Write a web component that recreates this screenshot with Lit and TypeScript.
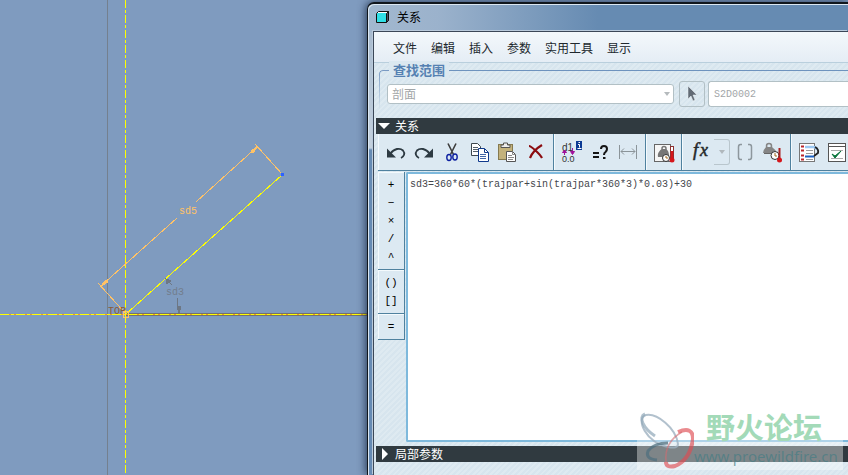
import { LitElement, html, css, svg } from "lit";
import { customElement, state } from "lit/decorators.js";

const icon = (body: unknown, w = 24, h = 24) =>
  html`<svg width=${w} height=${h} viewBox="0 0 ${w} ${h}" aria-hidden="true">${body}</svg>`;

const ICONS: Record<string, unknown> = {
  undo: icon(svg`<path d="M3 8.500v9h9z" fill="#2d3a42"/><path d="M6.500 13.500C10 8.500 16 7.500 19 10.500c2.500 3 1 6-2 7.500" fill="none" stroke="#2d3a42" stroke-width="1.800"/>`),
  redo: icon(svg`<path d="M21 8.500v9h-9z" fill="#2d3a42"/><path d="M17.500 13.500C14 8.500 8 7.500 5 10.500c-2.500 3-1 6 2 7.500" fill="none" stroke="#2d3a42" stroke-width="1.800"/>`),
  cut: icon(svg`<path d="M8 3.500l5.500 11M16 3.500l-5.500 11" stroke="#3c3c3c" stroke-width="1.600" fill="none"/>
    <ellipse cx="9" cy="17.500" rx="2.200" ry="3" fill="none" stroke="#0c1fa0" stroke-width="1.400"/>
    <ellipse cx="15" cy="17" rx="2.200" ry="3" fill="none" stroke="#0c1fa0" stroke-width="1.400"/>`),
  copy: icon(svg`<path d="M3.500 3.500h6l3 3v9h-9z" fill="#fff" stroke="#3d474d"/><path d="M5 7.500h5M5 9.500h5M5 11.500h5" stroke="#56616a"/>
    <path d="M10.500 8.500h6l4 4v9h-10z" fill="#fff" stroke="#103a8c"/><path d="M16.500 8.500v4h4" fill="none" stroke="#103a8c"/><path d="M12 14.500h6M12 16.500h6M12 18.500h6" stroke="#4267a8"/>`),
  paste: icon(svg`<rect x="2.500" y="4.500" width="14" height="15" fill="#c3b27c" stroke="#857a50"/><path d="M5 7.500h9V5h-2.500V3h-4v2H5z" fill="#eee" stroke="#555"/>
    <path d="M10.500 11.500h6l3 3v7h-9z" fill="#fff" stroke="#555"/><path d="M16.500 11.500v3h3M12 15.500h4M12 17.500h6M12 19.500h5" fill="none" stroke="#888"/>`),
  remove: icon(svg`<path d="M5 6c2 0 11 8 13 12M18 5C13 8 8 13 6 18" stroke="#8b0c10" stroke-width="2.200" fill="none"/>`),
  dims: icon(svg`<text x="2" y="11" font-size="10" font-family="Liberation Sans, sans-serif" fill="#333">d1</text><text x="2" y="22" font-size="9" font-family="Liberation Sans, sans-serif" fill="#333">0.0</text>
    <path d="M4.500 15V11M2.500 12.500h4L4.500 10zM12.500 8v5M10.500 11.500h4l-2 3z" stroke="#a0109a" fill="#a0109a"/>
    <rect x="16" y="1" width="6" height="9" fill="#0a3a94"/><path d="M18 4.500h1.500v3M17.500 8.500h4M18.500 2.500h1.500" stroke="#fff" fill="none"/>`),
  query: icon(svg`<path d="M5 13h6M5 17h6" stroke="#151515" stroke-width="2"/><path d="M13 9q0-3 3-3 3 0 3 3 0 1.500-1.500 3-1.500 1-1.500 3M15 18h2.500" fill="none" stroke="#151515" stroke-width="2"/>`),
  measure: icon(svg`<path d="M3.500 5v14M20.500 5v14M5 11.500h14M8 8.500l-3 3 3 3M16 8.500l3 3-3 3" fill="none" stroke="#8b9499"/>`),
  unitBox: icon(svg`<rect x="2.500" y="4.500" width="16" height="17" fill="#f6f6f6" stroke="#666"/><path d="M6 17c-1-4 2-7 4-8l4 0c3 2 3 5 3 8z" fill="#777"/><circle cx="12" cy="8.500" r="2" fill="none" stroke="#777" stroke-width="1.500"/>
    <circle cx="14" cy="18" r="3.500" fill="#fff" stroke="#333"/><path d="M14 16v2h2" stroke="#a36a20" fill="none"/><rect x="18.500" y="6.500" width="3" height="12" fill="#fff" stroke="#8d3030"/><path d="M20 11v9" stroke="#d5161b" stroke-width="2.500"/><circle cx="20" cy="20" r="2.500" fill="#d5161b"/>`),
  fx: icon(svg`<g font-style="italic" font-family="Liberation Serif, serif" fill="#26292b" stroke="#26292b" stroke-width=".5"><text x="5" y="16" font-size="19">f</text><text x="12" y="16" font-size="18">x</text></g>`),
  paren: icon(svg`<path d="M9 4.500H7.500Q5.500 4.500 5.500 7v10q0 2.500 2 2.500H9M15 4.500h1.500Q18.500 4.500 18.500 7v10q0 2.500-2 2.500H15" fill="none" stroke="#8d979d" stroke-width="1.500"/>`),
  unit: icon(svg`<path d="M2 13q0-3 3-6h6q4 3 5 6z" fill="#858585"/><circle cx="8" cy="6" r="2.500" fill="none" stroke="#858585" stroke-width="1.500"/><path d="M3 13.500h11" stroke="#666"/>
    <circle cx="14" cy="15.500" r="4" fill="#fff" stroke="#333"/><path d="M14 13v3h2" stroke="#a36a20" fill="none"/><path d="M18.500 8v11" stroke="#a22" stroke-width="2"/><circle cx="18.500" cy="20" r="2.500" fill="#d5161b"/>`),
  sort: icon(svg`<rect x="2.500" y="3.500" width="15" height="18" fill="#fff" stroke="#777"/><path d="M4 6.500h3M4 10.500h3M4 15.500h3M4 19.500h3" stroke="#b8242b" stroke-width="2"/><path d="M9 10.500h7M9 13.500h7M9 19.500h7" stroke="#999"/>
    <path d="M8 7h8q4 0 4 3" stroke="#9bc8f3" stroke-width="2.500" fill="none"/><path d="M18 7q4 2 3 6l-4 3" stroke="#222" stroke-width="1.800" fill="none"/><path d="M8 16.500h9" stroke="#1b62c4" stroke-width="2"/>`),
  verify: icon(svg`<rect x="3.500" y="3.500" width="17" height="18" fill="#fff" stroke="#555"/><path d="M4 6.500h16" stroke="#555"/><path d="M6 10.500h12M6 18.500h12" stroke="#aaa"/><path d="M7 14l3 4 6-7-6 5z" fill="#08743a" stroke="#08743a"/>`),
};

const GROUPS: [string, string][][] = [
  [["undo", "撤消"], ["redo", "重做"], ["cut", "剪切"], ["copy", "复制"], ["paste", "粘贴"], ["remove", "删除"]],
  [["dims", "切换尺寸"], ["query", "提供值"], ["measure", "显示尺寸"]],
  [["unitBox", "设置单位"]],
  [["fx", "插入函数"], ["more", "更多函数"], ["paren", "插入参数"], ["unit", "单位"]],
  [["sort", "排序关系"], ["verify", "校验关系"]],
];

const OPERATORS = [["+", "−", "×", "/", "^"], ["()", "[]"], ["="]];
const MENUS = ["文件", "编辑", "插入", "参数", "实用工具", "显示"];

/* Sketcher view with the dimensioned line */
@customElement("sketch-canvas")
export class SketchCanvas extends LitElement {
  static styles = css`
    :host { display: block; overflow: hidden; background: #7f9bbf; }
    svg { display: block; width: 100%; height: 100%; shape-rendering: crispEdges; }
    .label { font: 10px "Liberation Mono", monospace; }
    .orange { stroke: #ffc266; fill: none; }
    .yellow { stroke: #ffff00; fill: none; }
    .gray { stroke: #74808f; fill: none; }
  `;
  render() {
    return html`<svg role="img" aria-label="草绘">
      <line x1="107.5" x2="107.5" y1="0" y2="100%" class="gray" />
      <line x1="126" x2="100%" y1="314.500" y2="314.500" stroke="#74716e" stroke-width="3" />
      <line x1="0" x2="100%" y1="314.500" y2="314.500" stroke="#ef9b20" />
      <line x1="0" x2="100%" y1="314.500" y2="314.500" class="yellow" stroke-dasharray="9 2 3 2" />
      <line x1="125.500" x2="125.500" y1="0" y2="100%" class="yellow" stroke-dasharray="8 2 3 2" />
      <path d="M126 314L282 175" class="yellow" />
      <path d="M102 285L177 218M196 202L258 146M98 283L126 314M255 144L282 174" class="orange" />
      <path d="M101 286l5-6 2 2zM258 146l-7 5 2 2z" fill="#ffc266" stroke="#ffc266" />
      <path d="M123 311h5v6h-5z" class="orange" />
      <path d="M166 279l6 6M166 279l1 5 4-3zM177 298l2 15M177 306h4l-2 7z" stroke="#6d7784" fill="#6d7784" />
      <rect x="281" y="173" width="3" height="3" fill="#2e62ff" />
      <text x="179" y="214" class="label" fill="#ffc266">sd5</text>
      <text x="166" y="295" class="label" fill="#727d8c">sd3</text>
      <text x="108" y="314" class="label" fill="#8c5a35">TOP</text>
    </svg>`;
  }
}

/* Forum mark laid over the lower right corner */
@customElement("forum-mark")
export class ForumMark extends LitElement {
  static styles = css`
    :host { display: flex; pointer-events: none; width: 206px; height: 64px; box-sizing: border-box;
      background: rgba(255, 255, 255, 0.38); }
    .logo { flex: none; width: 57px; height: 64px; }
    .words { display: flex; flex-direction: column; }
    .name { font: bold 29px/34px "Liberation Sans", "Noto Sans CJK SC", sans-serif; color: #a3dab8; padding: 6px 0 0 12px; white-space: nowrap; }
    .site { font: 15px/20px "Noto Sans", sans-serif; color: rgba(70, 125, 132, 0.7); white-space: nowrap; }
  `;
  render() {
    return html`<svg class="logo" viewBox="0 0 57 64" aria-hidden="true">
        <g fill="none">
          <path d="M41 38C39 22 20 7 9 9-2 12 9 37 31 41Q41 43 41 38" stroke="#9fb2c1" stroke-opacity=".8" stroke-width="2" />
          <path d="M18 30C6 22 1 11 8 8" stroke="#8fa6b8" stroke-opacity=".7" stroke-width="3" />
          <path d="M31 37Q17 37 11 45 8 53 20 54" stroke="#50707f" stroke-opacity=".75" stroke-width="3" />
          <path d="M41 26Q56 20 56 33 53 54 38 60 29 62 29 56" stroke="#df4b52" stroke-opacity=".65" stroke-width="4" />
          <path d="M29 56Q27 36 45 26" stroke="#d46a70" stroke-opacity=".6" stroke-width="1.500" />
        </g>
      </svg>
      <div class="words"><span class="name">野火论坛</span><span class="site">www.proewildfire.cn</span></div>`;
  }
}

@customElement("relations-window")
export class RelationsWindow extends LitElement {
  @state() private relation = "sd3=360*60*(trajpar+sin(trajpar*360*3)*0.03)+30";

  static styles = css`
    * { box-sizing: border-box; }
    :host { display: flex; box-sizing: border-box; flex-direction: column; min-width: 0; overflow: hidden;
      border: 1px solid #10161c; border-width: 2px 0 0 1px; border-top-left-radius: 7px; padding-left: 5px;
      font: 12px "Noto Sans CJK SC", sans-serif; color: #20282d;
      background:
        linear-gradient(90deg, #a2b8cf 0, #9bb2cc 70px, #668bb2 230px) top / 100% 28px no-repeat,
        linear-gradient(#a2b6cb, #c4d1de 144px, #668bb4 146px);
      box-shadow: inset 1px 1px #dbe7f2, -1px 0 8px rgba(15, 30, 55, 0.8); }
    button { border: 0; background: none; padding: 0; color: inherit; font: inherit; display: grid; place-items: center; }
    .title { display: flex; align-items: center; gap: 7px; height: 27px; flex: none; padding: 0 0 2px 2px; font-size: 12px; font-weight: 400; margin: 0; color: #000; }
    .body { flex: 1; display: flex; flex-direction: column; min-height: 0; border: 1px solid #3b4757; border-width: 1px 0 0 1px;
      box-shadow: -1px -1px #b9cadb; padding-left: 2px;
      background: repeating-linear-gradient(135deg, #d7e5ee 0 2px, #deeaf1 2px 4px); }
    .menu { display: flex; flex: none; gap: 14px; align-items: center; height: 31px; margin-left: -2px; padding-left: 19px;
      background: linear-gradient(#f3f8fb, #e5edf5); border-bottom: 1px solid #b9cfdd; }
    .scope { display: flex; flex: none; height: 55px; margin: 0 0 0 3px; padding: 0 0 8px 8px; min-width: 0; position: relative; }
    .scope::before { content: ""; position: absolute; inset: 7px 0 8px 0; border: solid #7899c2; border-width: 1px 0 0 1px; border-top-left-radius: 4px;
      mask: linear-gradient(#000, transparent); }
    .line { position: absolute; inset: 7px 0 auto 70px; border-top: 1px solid #6e93be; }
    .legend { position: absolute; top: -2px; left: 10px; padding: 0 4px; line-height: 18px; font-size: 13px; font-weight: bold; color: #5581b2; background: #dbe8f0; }
    .row { display: flex; gap: 3px; flex: 1; align-items: center; padding-top: 15px; min-width: 0; }
    .pick { position: relative; flex: none; width: 289px; padding-right: 2px; }
    .pick svg { position: absolute; right: 6px; top: 8px; }
    select, .target { border: 1px solid #b2c0c5; border-radius: 3px; background: #fff; color: #a2a6a8; opacity: 1; }
    select { display: block; appearance: none; width: 100%; height: 20px; padding: 0 4px; font: inherit; line-height: 18px; }
    .arrow { flex: none; width: 26px; height: 26px; border: 1px solid #b2c0c5; border-radius: 3px; }
    .target { flex: 1; min-width: 0; height: 26px; padding: 0 5px; font: 10px "Liberation Mono", monospace; border-right: 0; border-radius: 3px 0 0 3px; }
    .section { display: flex; gap: 5px; align-items: center; height: 16px; flex: none; padding-left: 2px; background: #303a40; color: #fff; width: 100%; justify-content: start; line-height: 16px; }
    .tools { display: flex; flex: none; height: 37px; margin-left: 2px; background: #dce9f2; border-bottom: 1px solid #4f819f; overflow: hidden; }
    .group { display: flex; flex: none; align-items: center; padding: 0 3px 0 4px; border-right: 1px solid #4f819f; box-shadow: inset 1px 0 #f4fafd; }
    .group button { width: 28px; height: 28px; }
    .group .more { width: 16px; height: 26px; border: 1px solid #b9c6cd; border-left: 0; border-radius: 0 3px 3px 0; margin-right: 1px; }
    .editor { flex: 1; display: flex; min-height: 0; gap: 1px; margin: 1px 0 4px 2px; }
    .ops { width: 27px; flex: none; }
    .opset { padding: 4px 0 3px; border: solid #4f819f; border-width: 0 1px 1px 0; background: #dce9f2; box-shadow: inset 1px 1px #f4fafd; }
    .opset button { width: 26px; height: 18px; font: 11px/18px "Liberation Mono", monospace; color: #000; }
    textarea { flex: 1; min-width: 0; resize: none; outline: 0; border: 2px solid #7eb9dc; border-right: 0; border-radius: 2px 0 0 2px; padding: 5px 2px; margin: 0; background: #fff; color: #44464c; font: 10px/12px "Liberation Mono", monospace; }
    .foot { flex: none; height: 13px; }
  `;

  render() {
    return html`
      <h1 class="title">
        ${icon(svg`<path d="M1.500 4.500l2-2h10v9l-2 2h-10z" fill="#fff" stroke="#111"/><path d="M11.500 13.500l2-2v-9l-2 2z" fill="#456" stroke="#111"/><rect x="2" y="4" width="9" height="9" fill="#30dfe5"/>`, 15, 15)}
        关系
      </h1>
      <div class="body">
        <nav class="menu">${MENUS.map((m) => html`<button>${m}</button>`)}</nav>
        <div class="scope" role="group" aria-label="查找范围">
          <span class="line"></span><span class="legend">查找范围</span>
          <div class="row">
            <div class="pick">
              <select disabled aria-label="对象类型"><option>剖面</option></select>
              ${icon(svg`<path d="M0 0h6L3 4z" fill="#b5babd"/>`, 6, 4)}
            </div>
            <button class="arrow" aria-label="选取">
              ${icon(svg`<path d="M5 1v13l3-3 2 5 2-1-2-5h4z" fill="#626b75" stroke="#eef4f8" stroke-width=".5"/>`, 18, 18)}
            </button>
            <input class="target" value="S2D0002" disabled aria-label="对象名称" />
          </div>
        </div>
        <button class="section">${icon(svg`<path d="M0 3h12L6 9z" fill="#fff"/>`, 12, 12)}关系</button>
        <div class="tools">
          ${GROUPS.map((g) => html`<div class="group">${g.map(([k, label]) =>
            k === "more"
              ? html`<button class="more" aria-label=${label}>${icon(svg`<path d="M0 0h6L3 4z" fill="#b0b8bd"/>`, 6, 4)}</button>`
              : html`<button aria-label=${label}>${ICONS[k]}</button>`)}</div>`)}
        </div>
        <div class="editor">
          <div class="ops">${OPERATORS.map((s) => html`<div class="opset">${s.map((o) => html`<button>${o}</button>`)}</div>`)}</div>
          <textarea aria-label="关系" spellcheck="false" .value=${this.relation}
            @input=${(e: Event) => (this.relation = (e.target as HTMLTextAreaElement).value)}></textarea>
        </div>
        <button class="section">${icon(svg`<path d="M4 0v12l6-6z" fill="#fff"/>`, 12, 12)}局部参数</button>
        <div class="foot"></div>
      </div>`;
  }
}

@customElement("app-root")
export class AppRoot extends LitElement {
  static styles = css`
    :host { display: grid; grid-template: minmax(0, 1fr) / 367px minmax(0, 1fr); height: 100vh; position: relative; background: #7f9bbf; overflow: hidden; }
    relations-window { margin-top: 2px; position: relative; }
    forum-mark { position: absolute; right: 5px; bottom: 5px; }
  `;
  render() {
    return html`<sketch-canvas></sketch-canvas><relations-window></relations-window><forum-mark></forum-mark>`;
  }
}
